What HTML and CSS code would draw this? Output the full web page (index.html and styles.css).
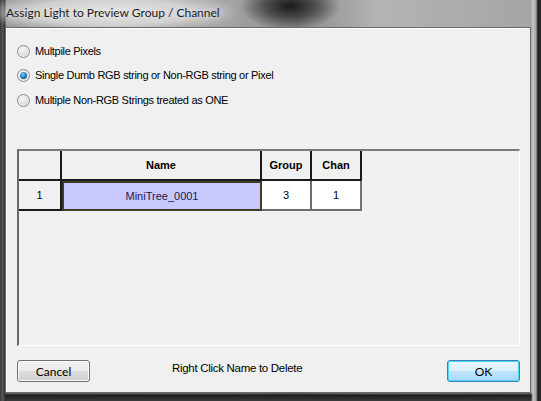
FILE: index.html
```html
<!DOCTYPE html>
<html>
<head>
<meta charset="utf-8">
<link rel="stylesheet" href="styles.css">
</head>
<body>
<div class="frame">
  <div class="titlebar"><span class="title">Assign Light to Preview Group / Channel</span></div>
  <div class="client">
    <div class="options">
      <label class="opt"><span class="radio"></span><span>Multpile Pixels</span></label>
      <label class="opt"><span class="radio checked"></span><span>Single Dumb RGB string or Non-RGB string or Pixel</span></label>
      <label class="opt"><span class="radio"></span><span>Multiple Non-RGB Strings treated as ONE</span></label>
    </div>
    <div class="grid">
      <div class="grow head">
        <div class="cell rh"></div>
        <div class="cell ch name">Name</div>
        <div class="cell ch grp">Group</div>
        <div class="cell ch chan">Chan</div>
      </div>
      <div class="grow">
        <div class="cell rh">1</div>
        <div class="cell name sel">MiniTree_0001</div>
        <div class="cell grp val">3</div>
        <div class="cell chan val">1</div>
      </div>
    </div>
    <div class="footer">
      <button class="btn">Cancel</button>
      <span class="hint">Right Click Name to Delete</span>
      <button class="btn ok">OK</button>
    </div>
  </div>
</div>
</body>
</html>
```
FILE: styles.css
```css
html, body { margin: 0; padding: 0; }
body {
  width: 541px; height: 401px; overflow: hidden;
  font-family: "Liberation Sans", Arial, sans-serif;
}
.frame {
  width: 541px; height: 401px; box-sizing: border-box;
  padding: 0 10px 8px 5px;
  display: flex; flex-direction: column;
  background:
    radial-gradient(ellipse 50px 24px at 290px 6px, #1a1a1a 0%, rgba(30,30,30,0.6) 50%, rgba(30,30,30,0) 100%),
    radial-gradient(ellipse 130px 22px at 110px 12px, #e4e4e4 0%, rgba(220,220,220,0.8) 60%, rgba(200,200,200,0) 100%),
    linear-gradient(90deg, #3a3a3a 0px, #5a5a5a 3px, #2a2a2a 5px, rgba(0,0,0,0) 6px),
    linear-gradient(90deg, rgba(0,0,0,0) 531px, #c8c8c8 533px, #a0a0a0 536px, #1e1e1e 538px, #2a2a2a 541px),
    linear-gradient(180deg, rgba(0,0,0,0) 392px, #1e1e1e 395px, #3a3a3a 401px),
    linear-gradient(90deg, #9a9a9a 0%, #a8a8a8 40%, #8c8c8c 55%, #b4b4b4 70%, #a4a4a4 100%);
}
.titlebar {
  height: 27px; display: flex; align-items: center; padding-left: 1px;
}
.title {
  font-family: "Lato", "Open Sans", sans-serif; font-size: 12px; color: #1c1c1c;
  margin-top: -2px;
  text-shadow: 0 0 6px #eee, 0 0 10px #ddd;
}
.client {
  flex: 1; background: #f0f0f0;
  border: 1px solid #6a6a6a;
  box-shadow: inset 1px 1px 0 #fff;
  display: flex; flex-direction: column;
  padding: 0 10px 0 11px;
}
.options {
  display: flex; flex-direction: column;
  padding-top: 15px; gap: 11px;
  font-family: "Liberation Sans", Arial, sans-serif; font-size: 11px; letter-spacing: -0.3px; color: #000;
}
.opt { display: flex; align-items: center; gap: 5px; height: 14px; }
.opt:nth-child(1) { margin-top: 1px; margin-bottom: -1px; }
.radio {
  width: 11px; height: 11px; border-radius: 50%;
  border: 1px solid #8a8a8a;
  background: radial-gradient(circle at 40% 35%, #f8f8f8 0%, #e0e0e0 50%, #c4c4c4 100%);
  box-shadow: inset 0 0 0 1px #f4f4f4;
  position: relative; flex: none;
}
.radio.checked::after {
  content: ""; position: absolute; left: 2px; top: 2px; width: 7px; height: 7px;
  border-radius: 50%;
  background: radial-gradient(circle at 40% 35%, #7ed0f8 0%, #1c73b8 55%, #0b3a6e 100%);
}
.grid {
  margin-top: 42px;
  height: 194px;
  border-top: 2px solid #7a7a7a; border-left: 2px solid #6a6a6a;
  border-right: 1px solid #fff; border-bottom: 1px solid #fff;
  background: #f0f0f0;
}
.grow { display: flex; height: 30px; }
.cell {
  box-sizing: border-box; display: flex; align-items: center; justify-content: center;
  font-size: 11px; color: #000;
}
.rh { width: 43px; border-right: 2px solid #1a1a1a; border-bottom: 2px solid #1a1a1a; background: #f0f0f0; }
.name { width: 200px; }
.grp { width: 50px; }
.chan { width: 50px; }
.ch { font-weight: bold; border-right: 2px solid #1a1a1a; border-bottom: 2px solid #1a1a1a; background: #f0f0f0; }
.sel { background: #c8c8ff; border: 2px solid #3e3e22; color: #1a1a50; }
.val { background: #fff; border-right: 2px solid #707070; border-bottom: 2px solid #707070; }
.footer {
  display: flex; align-items: center; margin-top: 14px;
}
.btn {
  width: 73px; height: 22px; box-sizing: border-box;
  border: 1px solid #707070; border-radius: 3px;
  background: linear-gradient(180deg, #f2f2f2 0%, #ebebeb 48%, #dddddd 52%, #cfcfcf 100%);
  box-shadow: inset 0 0 0 1px #fcfcfc;
  font-family: "Lato", sans-serif; font-size: 12px; color: #000; padding: 0;
}
.hint { font-family: "Liberation Sans", Arial, sans-serif; font-size: 11.5px; letter-spacing: -0.3px; margin-left: 82px; margin-top: -7px; flex: 1; }
.ok {
  border-color: #3c7fb1;
  background: linear-gradient(180deg, #eaf6fd 0%, #d9f0fc 48%, #bee6fd 52%, #a7d9f5 100%);
  box-shadow: inset 0 0 0 1px #48d8fb;
}
```
